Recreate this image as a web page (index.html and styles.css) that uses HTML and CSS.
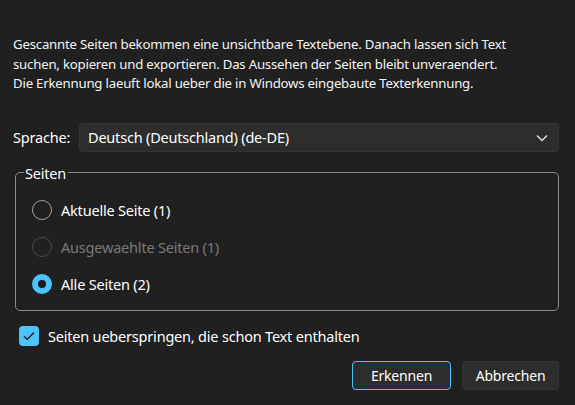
FILE: index.html
```html
<!DOCTYPE html>
<html lang="de">
<head>
<meta charset="utf-8">
<title>Texterkennung</title>
<link rel="stylesheet" href="styles.css">
</head>
<body>
<main class="dialog">
  <p class="intro">Gescannte Seiten bekommen eine unsichtbare Textebene. Danach lassen sich Text<br>suchen, kopieren und exportieren. Das Aussehen der Seiten bleibt unveraendert.<br>Die Erkennung laeuft lokal ueber die in Windows eingebaute Texterkennung.</p>

  <div class="lang-row">
    <span class="lang-label">Sprache:</span>
    <div class="select">
      <span>Deutsch (Deutschland) (de-DE)</span>
      <svg class="chev" width="12" height="8" viewBox="0 0 12 8"><path d="M1 1.5 L6 6.5 L11 1.5" fill="none" stroke="#e6e6e6" stroke-width="1.3"/></svg>
    </div>
  </div>

  <fieldset class="pages">
    <legend>Seiten</legend>
    <div class="radio"><span class="circle"></span><span>Aktuelle Seite (1)</span></div>
    <div class="radio disabled"><span class="circle"></span><span>Ausgewaehlte Seiten (1)</span></div>
    <div class="radio checked"><span class="circle"></span><span>Alle Seiten (2)</span></div>
  </fieldset>

  <div class="check-row">
    <span class="checkbox"><svg width="12" height="10" viewBox="0 0 12 10"><path d="M1 5.2 L4.3 8.3 L11 1.5" fill="none" stroke="#1a1a1a" stroke-width="1.3"/></svg></span>
    <span>Seiten ueberspringen, die schon Text enthalten</span>
  </div>

  <div class="buttons">
    <button class="btn primary">Erkennen</button>
    <button class="btn">Abbrechen</button>
  </div>
</main>
</body>
</html>
```

FILE: styles.css
```css
html, body {
  margin: 0;
  padding: 0;
  background: #202020;
}
body {
  font-family: "Noto Sans", "Open Sans", "Liberation Sans", sans-serif;
  font-size: 14.5px;
  letter-spacing: -0.2px;
  color: #ffffff;
}
.dialog {
  padding: 35px 16px 0 13px;
}
.intro {
  margin: 0;
  font-size: 13.2px;
  line-height: 19.5px;
  white-space: nowrap;
  color: #f4f4f4;
}
.lang-row {
  display: flex;
  align-items: center;
  margin-top: 29px;
}
.lang-label {
  width: 66px;
}
.select {
  flex: 1;
  height: 29px;
  box-sizing: border-box;
  background: #2d2d2d;
  border: 1px solid #353535;
  border-radius: 4px;
  display: flex;
  align-items: center;
  justify-content: space-between;
  padding: 0 10px 0 8px;
}
.chev { margin-top: 1px; }
.pages {
  margin: 13px 0 0 2px;
  border: 1.5px solid #8c8c8c;
  border-radius: 5px;
  padding: 11px 0 8px 16px;
  height: 146px;
  box-sizing: border-box;
}
.pages legend {
  padding: 0 2px 0 1px;
  margin-left: -8px;
  line-height: 16px;
}
.radio {
  display: flex;
  align-items: center;
  height: 37px;
  gap: 9px;
}
.circle {
  width: 20px;
  height: 20px;
  box-sizing: border-box;
  border-radius: 50%;
  border: 1.5px solid #a0a0a0;
}
.radio.disabled { color: #7a7a7a; }
.radio.disabled .circle { border-color: #4a4a4a; }
.radio.checked .circle {
  border: 6px solid #4cc2ff;
  background: #1a1a1a;
}
.check-row {
  display: flex;
  align-items: center;
  gap: 9px;
  margin: 15px 0 0 6px;
  height: 20px;
}
.checkbox {
  width: 20px;
  height: 20px;
  border-radius: 4px;
  background: #4cc2ff;
  display: flex;
  align-items: center;
  justify-content: center;
}
.buttons {
  display: flex;
  justify-content: flex-end;
  gap: 11px;
  margin-top: 15px;
}
.btn {
  font: inherit;
  font-size: 14px;
  letter-spacing: inherit;
  color: #ffffff;
  height: 29px;
  background: #2d2d2d;
  border: 1px solid #353535;
  border-radius: 4px;
  padding: 0;
}
.btn.primary {
  width: 99px;
  border: 1.5px solid #4cc2ff;
}
.btn:not(.primary) { width: 97px; }
```
